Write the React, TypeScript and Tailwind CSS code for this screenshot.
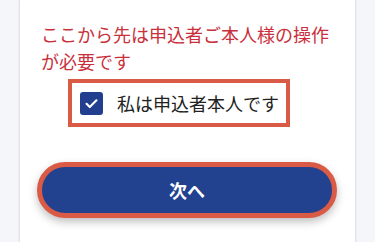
export default function App() {
  return (
    <div className="min-h-[242px] w-[375px] bg-[#f4f6fa] font-['Noto_Sans_CJK_JP','Noto_Sans',sans-serif] overflow-hidden">
      <div className="mx-[19px] h-[242px] bg-white border-x border-[#dfe2e8] shadow-[0_0_3px_rgba(0,0,0,0.06)]">
        <p className="pl-[21px] pr-[20px] pt-[21px] text-[18px] leading-[27px] text-[#c9303c]">
          ここから先は申込者ご本人様の操作が必要です
        </p>

        <div className="mt-[4px] ml-[48px] inline-flex items-center border-[4px] border-[#d95a45] pl-[8px] pr-[7px] h-[48px]">
          <span className="flex h-[23px] w-[23px] items-center justify-center rounded-[3px] bg-[#213f8e]">
            <svg viewBox="0 0 24 24" className="h-[17px] w-[17px]" fill="none" stroke="white" strokeWidth="3" strokeLinecap="round" strokeLinejoin="round">
              <path d="M5 12.5l4.5 4.5L19 7.5" />
            </svg>
          </span>
          <span className="ml-[14px] text-[18px] leading-[24px] text-[#222]">私は申込者本人です</span>
        </div>

        <button className="mt-[35px] ml-[17px] flex h-[56px] w-[300px] items-center justify-center rounded-full border-[5px] border-[#d95a45] bg-[#22418f] text-[18px] font-bold text-white shadow-[0_4px_8px_rgba(0,0,0,0.25)]">
          次へ
        </button>
      </div>
    </div>
  )
}
